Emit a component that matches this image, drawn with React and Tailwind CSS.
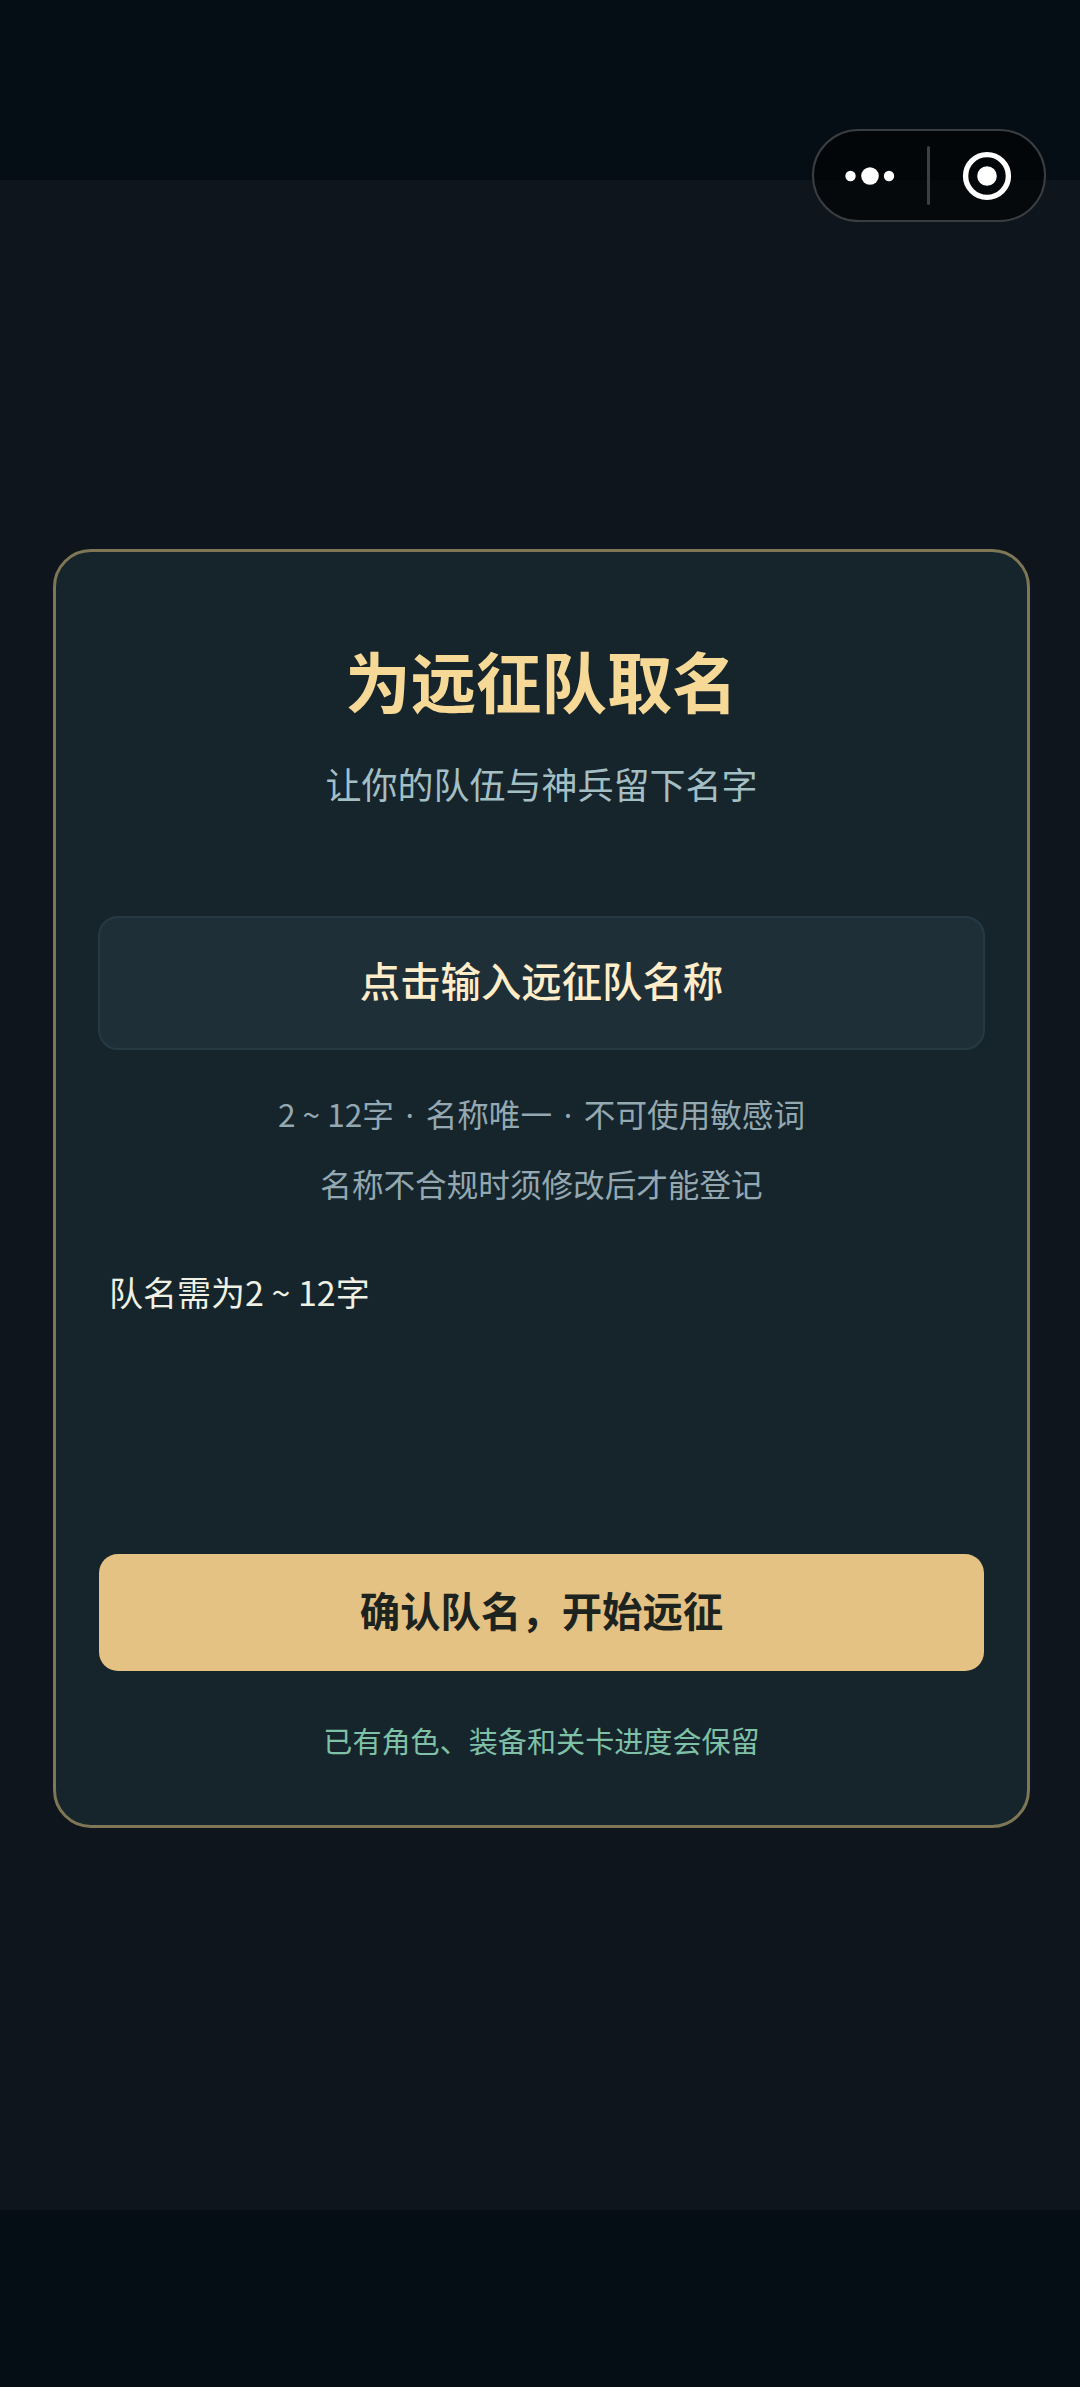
function MenuCapsule() {
  return (
    <div className="absolute left-[812px] top-[129px] flex h-[93px] w-[234px] items-center rounded-full border-2 border-[#3a3d41] bg-black/55">
      <svg viewBox="0 0 230 89" className="h-[89px] w-[230px]" fill="#fff">
        <circle cx="36.5" cy="45" r="5.2" />
        <circle cx="56" cy="45" r="8.8" />
        <circle cx="75" cy="45" r="5.2" />
        <rect x="113" y="15" width="3" height="59" rx="1.5" fill="#3c3f43" />
        <circle cx="173" cy="45" r="21.4" fill="none" stroke="#fff" strokeWidth="5.4" />
        <circle cx="173" cy="45" r="9.8" />
      </svg>
    </div>
  );
}

function Dot() {
  return <span className="px-[4.6px] font-['Noto_Sans',sans-serif]">·</span>;
}

function NameCard() {
  return (
    <div className="ml-[53px] flex h-[1279px] w-[977px] flex-col rounded-[38px] border-[3px] border-[#7e7655] bg-[#16242c] px-[42px]">
      <h1 className="mt-[80px] text-center text-[65.4px] leading-[96px] font-bold text-[#f6d996]">为远征队取名</h1>
      <p className="mt-[28px] text-center text-[36px] leading-[54px] text-[#a3bfc4]">让你的队伍与神兵留下名字</p>

      <button className="mt-[106px] flex h-[134px] w-full shrink-0 items-center justify-center rounded-[20px] border-2 border-[#273a43] bg-[#1e2f38] pb-[5px] text-[40.4px] leading-none font-medium text-[#ffecc8]">
        点击输入远征队名称
      </button>

      <div className="mt-[29px] text-center text-[31.6px] leading-[69px] text-[#93a8b1]">
        <p>2 ~ 12字 <Dot /> 名称唯一 <Dot /> 不可使用敏感词</p>
        <p>名称不合规时须修改后才能登记</p>
      </div>

      <p className="mt-[49px] pl-[11px] text-[34px] leading-[50px] text-[#eef1e4]">队名需为2 ~ 12字</p>

      <button className="mx-px mt-[237px] flex h-[117px] shrink-0 items-center justify-center rounded-[19px] bg-[#e4c283] pb-[5px] text-[40.4px] leading-none font-bold text-[#1d241f]">
        确认队名，开始远征
      </button>
      <p className="mt-[47px] text-center text-[29.1px] leading-[44px] text-[#7fc1a7]">已有角色、装备和关卡进度会保留</p>
    </div>
  );
}

export default function App() {
  return (
    <div className="relative flex h-[2387px] w-[1080px] flex-col overflow-hidden bg-[#060e15] font-['Noto_Sans_CJK_SC',sans-serif]">
      <div className="mt-[180px] h-[2030px] bg-[#0e151c] pt-[369px]">
        <NameCard />
      </div>
      <MenuCapsule />
    </div>
  );
}
